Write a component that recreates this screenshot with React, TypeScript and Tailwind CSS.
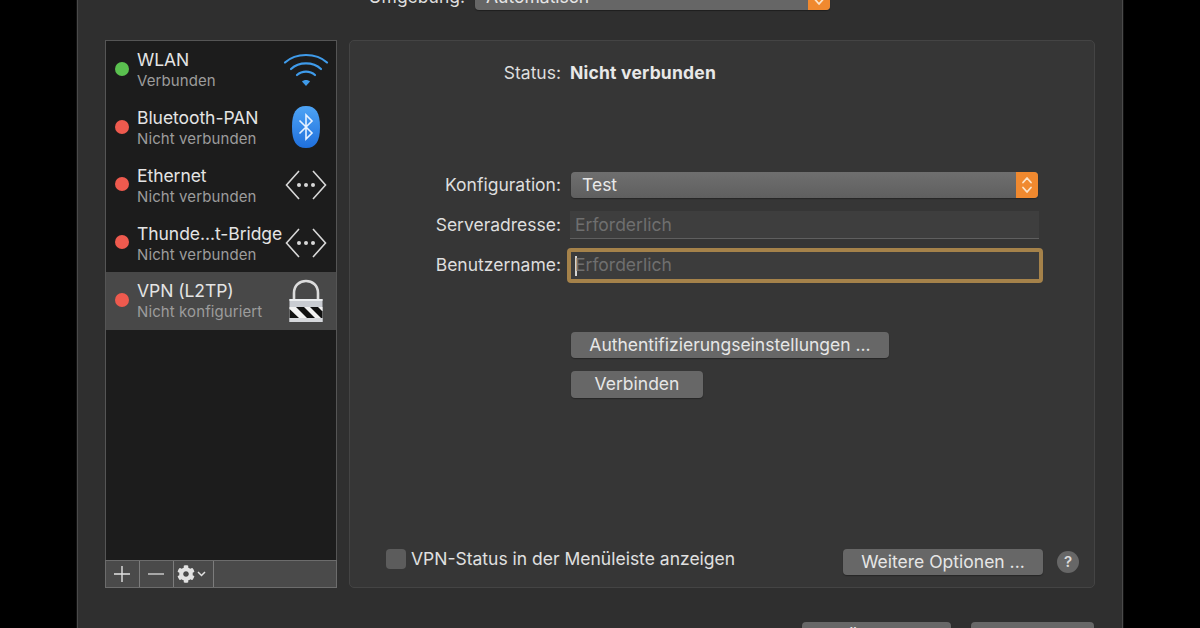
import { FaCog } from "react-icons/fa";

const font = "font-['Inter','Liberation_Sans',sans-serif]";

function StatusDot({ color }: { color: string }) {
  return <span className={`h-[14px] w-[14px] shrink-0 rounded-full ${color}`} />;
}

function WifiIcon() {
  return (
    <svg width="46" height="36" viewBox="0 0 46 36" fill="none" stroke="#3f9bea" strokeWidth="2.2" strokeLinecap="round">
      <path d="M2 11.5C13 1.5 33 1.5 44 11.5" />
      <path d="M8 18C16 10.5 30 10.5 38 18" />
      <path d="M14 24C19 19.5 27 19.5 32 24" />
      <path d="M19 30.5L23 35L27 30.5C25 28.5 21 28.5 19 30.5Z" fill="#3f9bea" stroke="none" />
    </svg>
  );
}

function BluetoothIcon() {
  return (
    <svg width="28" height="42" viewBox="0 0 28 42">
      <defs>
        <linearGradient id="bt" x1="0" y1="0" x2="0" y2="1">
          <stop offset="0" stopColor="#4ea4f5" />
          <stop offset="1" stopColor="#1f6fdc" />
        </linearGradient>
      </defs>
      <path d="M14 0C24 0 28 7 28 21C28 35 24 42 14 42C4 42 0 35 0 21C0 7 4 0 14 0Z" fill="url(#bt)" />
      <path d="M7.5 14.5L20 27L14 33V9L20 15L7.5 27.5" fill="none" stroke="#e8f2ff" strokeWidth="1.6" />
    </svg>
  );
}

function EthernetIcon() {
  return (
    <svg className="mt-[2px]" width="42" height="30" viewBox="0 0 42 30" fill="none" stroke="#d8d8d8" strokeWidth="1.6">
      <path d="M14 1L1.5 15L14 29" />
      <path d="M28 1L40.5 15L28 29" />
      <circle cx="14" cy="15" r="2" fill="#d8d8d8" stroke="none" />
      <circle cx="21" cy="15" r="2" fill="#d8d8d8" stroke="none" />
      <circle cx="28" cy="15" r="2" fill="#d8d8d8" stroke="none" />
    </svg>
  );
}

function LockIcon() {
  return (
    <svg className="mt-[2px]" width="34" height="44" viewBox="0 0 34 44">
      <path d="M5 21V14C5 -2 29 -2 29 14V21" fill="none" stroke="#dcdcdc" strokeWidth="2.6" />
      <rect x="0.5" y="20" width="33" height="23" fill="#c9ccd2" />
      <rect x="0.5" y="20" width="33" height="2" fill="#eceef0" />
      <rect x="0.5" y="28" width="33" height="11" fill="#f2f2f2" />
      <path d="M0.5 30L10 39H0.5Z" fill="#111" />
      <path d="M7 28H15L26 39H18Z" fill="#111" />
      <path d="M21 28H29L33.5 32.5V39H32Z" fill="#111" />
      <rect x="0.5" y="39" width="33" height="4" fill="#d5d7db" />
    </svg>
  );
}

function Updown({ size = 12 }: { size?: number }) {
  return (
    <svg width={size} height={size * 1.5} viewBox="0 0 12 18" fill="none" stroke="#fbe3c8" strokeWidth="1.8" strokeLinecap="round" strokeLinejoin="round">
      <path d="M2 6.5L6 2L10 6.5" />
      <path d="M2 11.5L6 16L10 11.5" />
    </svg>
  );
}

const services = [
  { name: "WLAN", sub: "Verbunden", dot: "bg-[#5ac04f]", icon: <WifiIcon /> },
  { name: "Bluetooth-PAN", sub: "Nicht verbunden", dot: "bg-[#ee5a4e]", icon: <BluetoothIcon /> },
  { name: "Ethernet", sub: "Nicht verbunden", dot: "bg-[#ee5a4e]", icon: <EthernetIcon /> },
  { name: "Thunde...t-Bridge", sub: "Nicht verbunden", dot: "bg-[#ee5a4e]", icon: <EthernetIcon /> },
  { name: "VPN (L2TP)", sub: "Nicht konfiguriert", dot: "bg-[#ee5a4e]", icon: <LockIcon />, selected: true },
];

function ServiceList() {
  return (
    <div className="flex h-[548px] w-[232px] shrink-0 flex-col">
      <div className="flex-1 border border-b-0 border-[#555555] bg-[#1c1c1c]">
        {services.map((s) => (
          <div key={s.name} className={`flex h-[57.75px] items-center pb-[2px] pl-[9px] pr-[7px] ${s.selected ? "bg-[#484848]" : ""}`}>
            <StatusDot color={s.dot} />
            <div className="ml-[8px] mt-[2px] min-w-0 flex-1 whitespace-nowrap">
              <div className="text-[17.5px] leading-[22px] tracking-[-0.05px] text-[#e4e4e4]">{s.name}</div>
              <div className="text-[15px] leading-[19px] tracking-[0.1px] text-[#9c9c9c]">{s.sub}</div>
            </div>
            <div className="flex w-[46px] justify-center">{s.icon}</div>
          </div>
        ))}
      </div>
      <div className="flex h-[28px] border border-[#6c6c6c] bg-[#4a4a4a] text-[#e2e2e2]">
        <div className="flex w-[34px] items-center justify-center border-r border-[#7c7c7c] pr-[2px]">
          <svg width="16" height="16" viewBox="0 0 16 16" stroke="#e2e2e2" strokeWidth="1.4"><path d="M8 0V16M0 8H16" /></svg>
        </div>
        <div className="flex w-[34px] items-center justify-center border-r border-[#7c7c7c] pr-[2px]">
          <svg width="16" height="16" viewBox="0 0 16 16" stroke="#d0d0d0" strokeWidth="1.4"><path d="M0 8H16" /></svg>
        </div>
        <div className="flex w-[40px] items-center gap-[2px] border-r border-[#7c7c7c] pl-[3px]">
          <FaCog size={18} />
          <svg width="9" height="6" viewBox="0 0 9 6" fill="none" stroke="#e2e2e2" strokeWidth="1.5"><path d="M1 1L4.5 4.5L8 1" /></svg>
        </div>
      </div>
    </div>
  );
}

function PushButton({ label, className }: { label: string; className: string }) {
  return (
    <button className={`flex items-center justify-center rounded-[4px] bg-[#676767] text-[17.5px] text-[#e6e6e6] shadow-[0_1px_1px_#262626] ${className}`}>
      {label}
    </button>
  );
}

function Label({ children }: { children: string }) {
  return <div className="w-[211px] shrink-0 text-right text-[17.5px] text-[#dedede]">{children}</div>;
}

function VpnPanel() {
  return (
    <div className="flex h-[548px] w-[746px] shrink-0 flex-col rounded-[5px] border border-[#444444] bg-[#363636]">
      <div className="mt-[21px] flex h-[22px] items-center">
        <Label>Status:</Label>
        <div className="ml-[9px] text-[17.5px] font-bold tracking-[0.2px] text-[#e8e8e8]">Nicht verbunden</div>
      </div>

      <div className="mt-[88px] flex h-[26px] items-center">
        <Label>Konfiguration:</Label>
        <div className="ml-[10px] flex h-[26px] w-[467px] items-center overflow-hidden rounded-[4px] bg-gradient-to-b from-[#6f6f6f] to-[#5f5f5f] shadow-[0_1px_1px_#262626]">
          <span className="flex-1 pl-[11px] text-[17.5px] text-[#e8e8e8]">Test</span>
          <span className="flex h-full w-[22px] items-center justify-center bg-[#f0892f]"><Updown /></span>
        </div>
      </div>

      <div className="mt-[13px] flex h-[28px] items-center">
        <Label>Serveradresse:</Label>
        <div className="ml-[9px] flex h-[28px] w-[469px] items-center border-b border-[#5f5f5f] bg-[#3e3e3e] pl-[5px] pt-[2px] text-[17.5px] text-[#6f6f6f]">Erforderlich</div>
      </div>

      <div className="mt-[9px] flex h-[35px] items-center">
        <Label>Benutzername:</Label>
        <div className="ml-[6px] flex h-[35px] w-[476px] items-center rounded-[4px] border-[4px] border-[#a5824a] bg-[#3c3c3c] pl-[4px] text-[17.5px] text-[#6f6f6f]">
          <span className="mr-[-2px] h-[20px] w-[2px] bg-[#d4d4d4]" />
          Erforderlich
        </div>
      </div>

      <div className="ml-[221px] mt-[49px] flex flex-col items-start gap-[13px]">
        <PushButton label="Authentifizierungseinstellungen ..." className="h-[26px] w-[318px]" />
        <PushButton label="Verbinden" className="h-[27px] w-[132px]" />
      </div>

      <div className="ml-[36px] mt-auto mb-[12px] flex items-start">
        <div className="flex items-center">
          <span className="h-[20px] w-[20px] rounded-[4px] bg-[#5c5c5c]" />
          <span className="ml-[5px] text-[17.5px] leading-[20px] text-[#e0e0e0]">VPN-Status in der Menüleiste anzeigen</span>
        </div>
        <PushButton label="Weitere Optionen ..." className="ml-auto h-[26px] w-[200px]" />
        <div className="ml-[14px] mr-[15px] mt-[2px] flex h-[22px] w-[22px] items-center justify-center rounded-full bg-[#676767] text-[15px] font-semibold text-[#dcdcdc]">?</div>
      </div>
    </div>
  );
}

export default function App() {
  return (
    <div className={`h-[628px] w-[1200px] overflow-hidden bg-black ${font}`}>
      <div className="ml-[77px] flex h-[628px] w-[1046px] flex-col border-x border-[#4a4a4a] bg-[#2f2f2f] outline outline-1 outline-[#111111]">
        <div className="-mt-[16px] flex h-[26px] shrink-0 items-center">
          <div className="ml-[290px] w-[97px] text-right text-[17.5px] text-[#dedede]">Umgebung:</div>
          <div className="ml-[10px] flex h-[26px] w-[355px] items-center overflow-hidden rounded-[4px] bg-[#666666] shadow-[0_1px_1px_#1f1f1f]">
            <span className="flex-1 pl-[11px] text-[17.5px] text-[#e6e6e6]">Automatisch</span>
            <span className="flex h-full w-[22px] items-center justify-center bg-[#f0892f]"><Updown /></span>
          </div>
        </div>

        <div className="ml-[27px] mt-[30px] flex gap-[12px]">
          <ServiceList />
          <VpnPanel />
        </div>

        <div className="ml-[724px] mt-[34px] flex shrink-0 gap-[20px]">
          <PushButton label="Zurücksetzen" className="h-[26px] w-[149px]" />
          <PushButton label="Anwenden" className="h-[26px] w-[123px]" />
        </div>
      </div>
    </div>
  );
}
